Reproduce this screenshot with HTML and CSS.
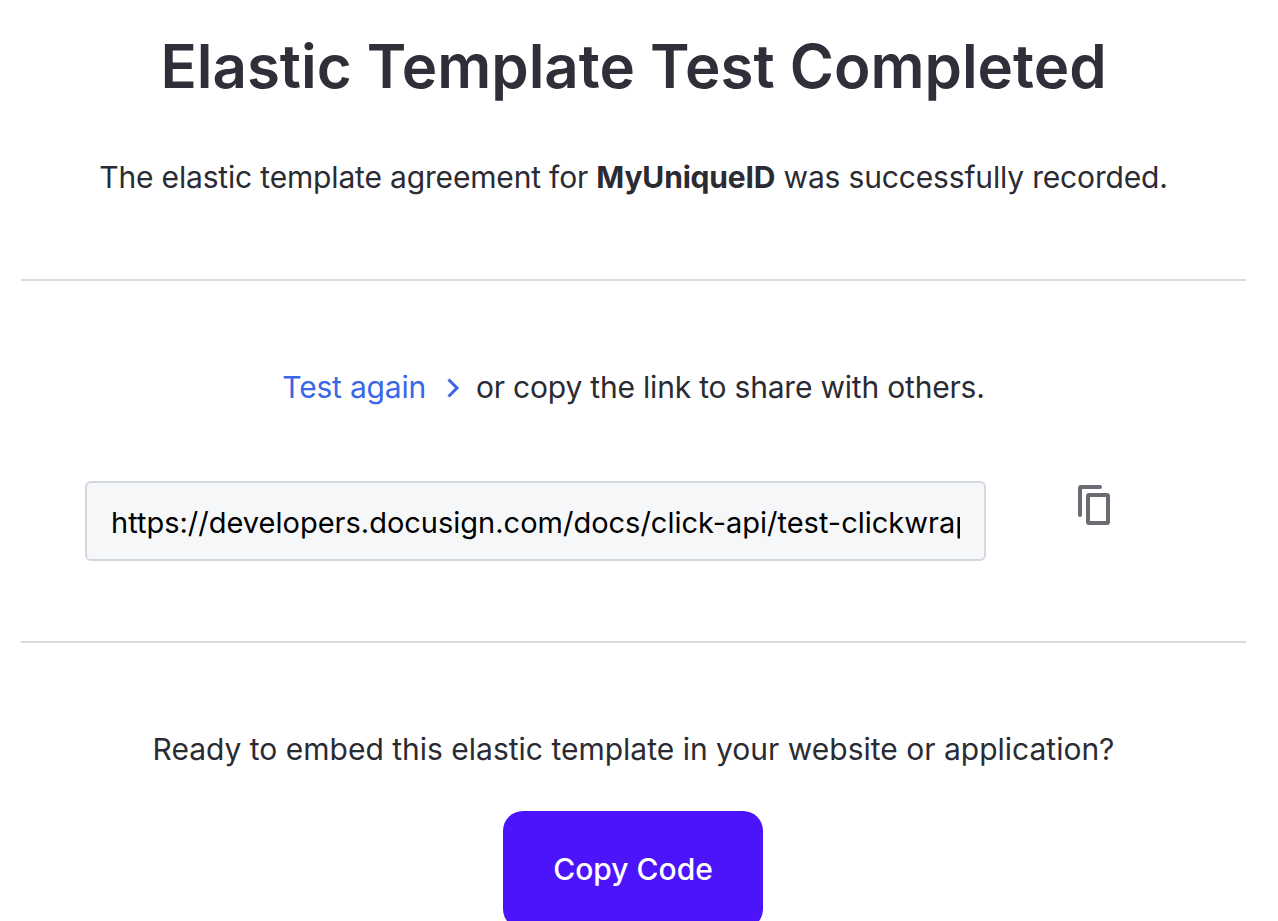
FILE: index.html
```html
<!DOCTYPE html>
<html lang="en">
<head>
    <meta charset="UTF-8">
    <meta name="viewport" content="width=device-width, initial-scale=1.0">
    <title>Elastic Template Test Completed</title>
    <link rel="stylesheet" href="styles.css">
</head>
<body>
    <div class="page">
        <section class="intro">
            <h1 class="title">Elastic Template Test Completed</h1>
            <p class="lead">The elastic template agreement for <strong>MyUniqueID</strong> was successfully recorded.</p>
        </section>

        <section class="share">
            <p class="share-text">
                <a class="test-link" href="#">Test again<svg class="chevron" width="14" height="20" viewBox="0 0 14 20" aria-hidden="true">
                        <path d="M2.500 1.500L11 10l-8.500 8.500" fill="none" stroke="#3a67e8" stroke-width="3"/>
                    </svg></a>or copy the link to share with others.
            </p>
            <div class="link-row">
                <input class="link-input" type="text" readonly value="https://developers.docusign.com/docs/click-api/test-clickwrap/">
                <button class="copy-icon" type="button" aria-label="Copy link">
                    <svg class="copy-svg" width="32" height="40" viewBox="0 0 32 40" aria-hidden="true">
                        <path d="M2 30V3Q2 2 3 2H22" fill="none" stroke="#6b6b73" stroke-width="4" stroke-linecap="round"/>
                        <rect x="10" y="10" width="20" height="28" rx="1" fill="none" stroke="#6b6b73" stroke-width="4"/>
                    </svg>
                </button>
            </div>
        </section>

        <section class="embed">
            <p class="embed-text">Ready to embed this elastic template in your website or application?</p>
            <button class="copy-code" type="button">Copy Code</button>
        </section>
    </div>
</body>
</html>
```
FILE: styles.css
```css
* {
    box-sizing: border-box;
}
html, body {
    height: 100%;
}
body {
    margin: 0;
    overflow: hidden;
    background-color: #ffffff;
    color: #2b2b33;
    font-family: "Inter", Arial, sans-serif;
}
.page {
    padding: 0 32px 0 21px;
}
.intro {
    text-align: center;
    height: 281px;
    border-bottom: 2px solid #d9d9df;
}
.title {
    margin: 0;
    padding-top: 26px;
    font-size: 60px;
    line-height: 80px;
    font-weight: 600;
    color: #2f2f3a;
}
.lead {
    margin: 51px 0 0;
    font-size: 30px;
    line-height: 40px;
    letter-spacing: -0.17px;
}
.lead strong {
    font-weight: 700;
}
.share {
    height: 362px;
    border-bottom: 2px solid #d9d9df;
}
.share-text {
    margin: 0;
    padding-top: 86px;
    font-size: 30px;
    line-height: 40px;
    letter-spacing: -0.2px;
    text-align: center;
}
.test-link {
    color: #3a67e8;
    text-decoration: none;
}
.chevron {
    margin: 0 16px 0 20px;
}
.link-row {
    display: flex;
    align-items: flex-start;
    margin: 74px 0 0 64px;
}
.link-input {
    width: 901px;
    height: 80px;
    padding: 3px 24px 0;
    border: 2px solid #d5d7de;
    border-radius: 6px;
    background-color: #f6f7f9;
    color: #000000;
    font-family: inherit;
    font-size: 29px;
}
.copy-icon {
    margin: 4px 0 0 92px;
    padding: 0;
    border: 0;
    background: none;
}
.copy-svg {
    display: block;
}
.embed {
    text-align: center;
}
.embed-text {
    margin: 0;
    padding-top: 86px;
    font-size: 30px;
    line-height: 40px;
}
.copy-code {
    display: block;
    width: 260px;
    height: 118px;
    margin: 42px 0 0 482px;
    padding-bottom: 3px;
    border: 0;
    border-radius: 20px;
    background-color: #4c14fb;
    color: #ffffff;
    font-family: inherit;
    font-size: 30px;
    font-weight: 500;
}
```
